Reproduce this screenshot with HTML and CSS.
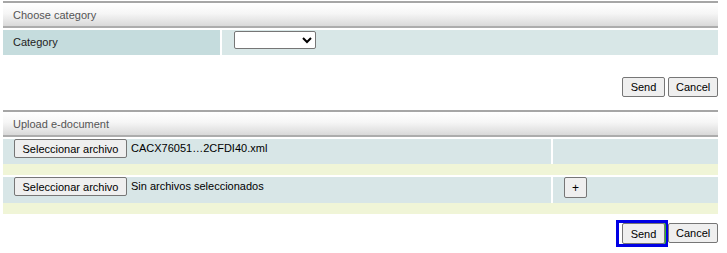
FILE: index.html
```html
<!DOCTYPE html>
<html lang="en">
<head>
  <meta charset="UTF-8">
  <title>e-document</title>
  <link rel="stylesheet" href="styles.css">
</head>
<body>

<div class="page">
  <div class="panel">
    <div class="panel-head">Choose category</div>
    <div class="row cat-row">
      <div class="cell label">Category</div>
      <div class="cell value">
        <select class="cat-select">
          <option></option>
        </select>
      </div>
    </div>
  </div>

  <div class="actions first">
    <button class="btn send">Send</button>
    <button class="btn cancel">Cancel</button>
  </div>

  <div class="panel">
    <div class="panel-head">Upload e-document</div>

    <div class="row file-row one">
      <div class="cell">
        <button class="btn pick">Seleccionar archivo</button>
        <span class="file-name">CACX76051…2CFDI40.xml</span>
      </div>
      <div class="cell"></div>
    </div>
    <div class="spacer"></div>

    <div class="row file-row two">
      <div class="cell">
        <button class="btn pick">Seleccionar archivo</button>
        <span class="file-name">Sin archivos seleccionados</span>
      </div>
      <div class="cell">
        <button class="btn plus">+</button>
      </div>
    </div>
    <div class="spacer"></div>
  </div>

  <div class="actions second">
    <span class="focus-ring"><button class="btn send focused">Send</button></span>
    <button class="btn cancel">Cancel</button>
  </div>
</div>

</body>
</html>
```

FILE: styles.css
```css
* {
  margin: 0;
  padding: 0;
  box-sizing: border-box;
}

body {
  background: #fff;
  font-family: 'Liberation Sans', Arial, sans-serif;
  font-size: 11px;
  color: #000;
}

.page {
  width: 715px;
  margin: 1px 0 0 3px;
}

.panel-head {
  height: 27px;
  border-top: 2px solid #a6a6a6;
  border-bottom: 2px solid #acacac;
  background: linear-gradient(#ffffff, #f6f6f6 45%, #d9d9d9);
  color: #555;
  padding: 5px 0 0 10px;
  line-height: 14px;
  margin-bottom: 2px;
}

.row {
  display: grid;
  column-gap: 2px;
}

.cat-row {
  grid-template-columns: 217px 1fr;
  height: 25px;
}

.cat-row .label {
  background: #c5dcdd;
  padding: 6px 0 0 10px;
  color: #222;
}

.cat-row .value {
  background: #d8e7e7;
  padding: 1px 0 0 12px;
}

.cat-select {
  width: 82px;
  height: 18px;
  background: #fff;
  border: 1px solid #767676;
  border-radius: 2px;
  font-size: 11px;
}

.btn {
  height: 20px;
  padding: 0 7px;
  border: 1px solid #767676;
  border-radius: 2px;
  background: #efefef;
  font-family: 'Liberation Sans', Arial, sans-serif;
  font-size: 11px;
  color: #000;
}

.btn.send {
  width: 43px;
}

.btn.cancel {
  width: 50px;
}

.actions {
  display: flex;
  justify-content: flex-end;
  align-items: flex-start;
  gap: 3px;
}

.actions.first {
  margin: 22px 0 13px;
}

.file-row {
  grid-template-columns: 548px 1fr;
}

.file-row .cell {
  background: #d8e6e7;
  display: flex;
  align-items: flex-start;
  padding-left: 11px;
}

.file-row.one .cell {
  height: 25px;
}

.file-row.two .cell {
  height: 26px;
}

.btn.pick {
  height: 19px;
  width: 113px;
}

.file-name {
  margin: 3px 0 0 4px;
}

.btn.plus {
  width: 23px;
  height: 21px;
  padding: 0;
  font-size: 12px;
}

.spacer {
  height: 11px;
  background: #f0f5d7;
  margin-bottom: 2px;
}

.actions.second {
  margin-top: 6px;
  gap: 0;
}

.actions.second .cancel {
  margin-top: 3px;
}

.focus-ring {
  display: flex;
  border: 3px solid #0000e4;
  padding-left: 3px;
}

.btn.focused {
  height: 21px;
  box-shadow: 1px 0 0 #2eb82e;
}
```
